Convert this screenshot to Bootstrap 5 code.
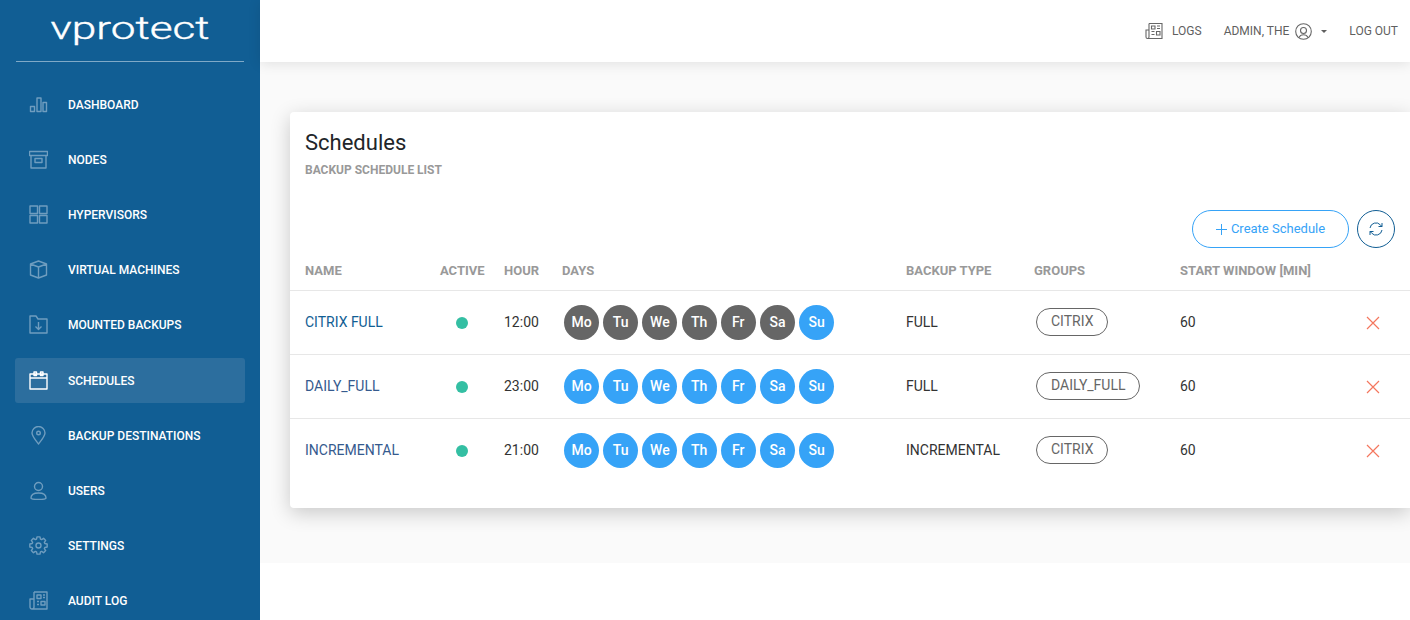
<!DOCTYPE html>
<html lang="en">
<head>
  <meta charset="UTF-8">
  <title>vProtect - Schedules</title>
  <link href="https://cdn.jsdelivr.net/npm/bootstrap@5.3.0/dist/css/bootstrap.min.css" rel="stylesheet">
  <style>
    html, body { height: 620px; overflow: hidden; }
    body { font-family: Roboto, "Liberation Sans", sans-serif; color: #212529; background: #fff; }
    .side-bar { width: 260px; flex: 0 0 260px; height: 620px; background: #115e94; overflow: hidden; }
    .brand-box { height: 62px; margin: 0 16px; border-bottom: 1px solid #7fa9c7; }
    .brand-name { color: #fff; font-size: 32px; line-height: 56px; font-weight: 300; display: block; text-align: center; transform: scaleX(1.38); -webkit-text-stroke: .4px #fff; }
    .side-menu { padding: 20px 15px 0; }
    .side-link { height: 45px; margin-bottom: 10px; padding-left: 14px; color: #fff; font-size: 12px; font-weight: 500; border-radius: 3px; text-decoration: none; }
    .side-link:hover { color: #fff; }
    .side-link.current { background: #2c6e9e; margin-top: 11px; }
    .side-link svg { width: 19px; height: 19px; margin-right: 20px; flex: none; fill: none; stroke: #6f9dbf; stroke-width: 1.4; stroke-linejoin: round; }
    .side-link.current svg { stroke: #fff; }
    .main-col { min-width: 0; }
    .top-bar { height: 62px; background: #fff; box-shadow: 0 2px 12px rgba(0,0,0,.1); position: relative; padding-right: 12px; font-size: 12px; color: #5f5f5f; }
    .top-bar svg { fill: none; stroke: #666; stroke-width: 1.1; }
    .top-link { color: #5f5f5f; text-decoration: none; }
    .top-gap { margin-left: 22px; }
    .logs-glyph { margin-right: 9px; }
    .user-glyph { margin-left: 6px; }
    .top-link.dropdown-toggle::after { margin-left: 9px; }
    .work-area { background: #fafafa; height: 501px; padding: 50px 0 0 30px; }
    .sched-card { background: #fff; height: 396px; border-radius: 4px 0 0 4px; box-shadow: 0 5px 20px rgba(0,0,0,.2); }
    .sched-head { padding: 18px 15px 0; }
    .sched-title { font-size: 22px; font-weight: 400; margin: 0 0 6px; line-height: 26px; }
    .sched-sub { font-size: 12px; font-weight: 700; color: #999; line-height: 16px; }
    .tool-row { padding: 32px 15px 0 0; height: 85px; }
    .create-btn { width: 157px; height: 38px; border: 1px solid #36a3f7; border-radius: 19px; color: #36a3f7; background: #fff; font-size: 13px; }
    .create-btn svg { stroke: #36a3f7; fill: none; }
    .reload-btn { width: 38px; height: 38px; border: 1px solid #115e94; border-radius: 50%; background: #fff; }
    .reload-btn svg { stroke: #115e94; fill: none; }
    .sched-table { table-layout: fixed; width: 1120px; margin: 0; font-size: 14px; }
    .sched-table col:nth-child(1) { width: 150px; }
    .sched-table col:nth-child(2) { width: 64px; }
    .sched-table col:nth-child(3) { width: 58px; }
    .sched-table col:nth-child(4) { width: 344px; }
    .sched-table col:nth-child(5) { width: 128px; }
    .sched-table col:nth-child(6) { width: 146px; }
    .sched-table col:nth-child(7) { width: 180px; }
    .sched-table col:nth-child(8) { width: 50px; }
    .sched-table th { font-size: 13px; font-weight: 700; color: #999; padding: 0 0 11px 0; border-bottom: 1px solid #e7e7e7; line-height: 16px; white-space: nowrap; }
    .sched-table td { height: 64px; padding: 0; vertical-align: middle; border-bottom: 1px solid #e7e7e7; color: #333; }
    .sched-table tr:last-child td { border-bottom: 0; }
    .sched-table .first-col { padding-left: 15px; }
    .sched-table .del-col { padding-left: 6px; }
    .job-link { color: #115e94; text-decoration: none; }
    .job-link.seen { color: #355a8e; }
    .status-dot { width: 12px; height: 12px; border-radius: 50%; background: #34bfa3; display: block; margin: 0 0 0 16px; }
    .day-row { padding-left: 2px; }
    .day-pill { width: 35px; height: 35px; border-radius: 50%; background: #666; color: #fff; font-size: 14px; font-weight: 500; margin-right: 4.2px; }
    .day-pill.on { background: #36a3f7; }
    .group-pill { display: block; width: fit-content; height: 28px; line-height: 25px; padding: 0 13.5px 0 14px; border: 1px solid #666; border-radius: 14px; color: #666; font-size: 14px; margin: 0 0 2px 2px; }
    .del-icon { stroke: #f4775e; fill: none; stroke-width: 1.2; display: block; }
  </style>
</head>
<body>
<div class="d-flex">
  <!-- sidebar -->
  <div class="side-bar">
    <div class="brand-box"><span class="brand-name">vprotect</span></div>
    <nav class="side-menu" id="sideMenu"></nav>
  </div>

  <div class="flex-grow-1 main-col">
    <!-- top bar -->
    <div class="top-bar d-flex align-items-center justify-content-end">
      <svg class="logs-glyph" width="18" height="18" viewBox="0 0 18 18"><path d="M4 1.500h13v15H2.500a1.500 1.500 0 0 1-1.500-1.500V8h3M4 1.500v13.500a1.500 1.500 0 0 1-1.500 1.500M6.500 4h3.500v3H6.500zM12 4h3M12 6.500h3M6.500 9.500h3M6.500 12.500h3M11.500 9.500h3.500v3.500h-3.500z"/></svg>
      <a class="top-link" href="#">LOGS</a>
      <a class="top-link top-gap d-flex align-items-center dropdown-toggle" href="#">ADMIN, THE
        <svg class="user-glyph" width="17" height="17" viewBox="0 0 17 17"><circle cx="8.500" cy="8.500" r="7.800"/><circle cx="8.500" cy="7.500" r="3"/><path d="M4 14.500c.8-1.800 2.300-2.800 4.500-2.800s3.700 1 4.500 2.800"/></svg>
      </a>
      <a class="top-link top-gap" href="#">LOG OUT</a>
    </div>

    <div class="work-area">
      <div class="sched-card">
        <div class="sched-head">
          <h3 class="sched-title">Schedules</h3>
          <div class="sched-sub text-uppercase">Backup schedule list</div>
        </div>
        <div class="tool-row d-flex justify-content-end align-items-start gap-2">
          <button class="create-btn d-flex align-items-center justify-content-center" type="button">
            <svg width="11" height="11" viewBox="0 0 11 11" class="me-1"><path d="M5.500 0v11M0 5.500h11"/></svg>Create Schedule
          </button>
          <button class="reload-btn d-flex align-items-center justify-content-center p-0" type="button">
            <svg width="16" height="16" viewBox="0 0 16 16"><path d="M2 7a6 6 0 0 1 10.500-3L14 5.500M14 2v3.500h-3.500M14 9a6 6 0 0 1-10.500 3L2 10.500M2 14v-3.500h3.500"/></svg>
          </button>
        </div>
        <table class="table sched-table">
          <colgroup><col><col><col><col><col><col><col><col></colgroup>
          <thead>
            <tr><th class="first-col">NAME</th><th>ACTIVE</th><th>HOUR</th><th>DAYS</th><th>BACKUP TYPE</th><th>GROUPS</th><th>START WINDOW [MIN]</th><th></th></tr>
          </thead>
          <tbody id="rows"></tbody>
        </table>
      </div>
    </div>
  </div>
</div>

<script src="https://cdn.jsdelivr.net/npm/bootstrap@5.3.0/dist/js/bootstrap.bundle.min.js"></script>
<script>
  // gear outline, 8 teeth
  function gearPath() {
    let pts = [];
    for (let i = 0; i < 8; i++) {
      const a = i * Math.PI / 4;
      [[-.3, 6.6], [-.17, 8.8], [.17, 8.8], [.3, 6.6]].forEach(p => {
        pts.push((9.5 + p[1] * Math.sin(a + p[0])).toFixed(2) + ' ' + (9.5 - p[1] * Math.cos(a + p[0])).toFixed(2));
      });
    }
    return 'M' + pts.join('L') + 'z';
  }

  const menu = [
    ['Dashboard', '<path d="M1.500 11.500h4v5h-4zM8 3h4v13.500H8zM14 7.500h3.500v9H14z"/>'],
    ['Nodes', '<path d="M.5 1.500h18v4H.5zM2 5.500V18h15V5.500M6 8.500h7v4H6z"/>'],
    ['Hypervisors', '<path d="M1 1h7.500v7.500H1zM10.500 1H18v7.500h-7.500zM1 10.500h7.500V18H1zM10.500 10.500H18V18h-7.500z"/>'],
    ['Virtual Machines', '<path d="M9.500 1L1.500 4v11l8 3 8-3V4zM1.500 4l8 3 8-3M9.500 7v11"/>'],
    ['Mounted Backups', '<path d="M1 1h6l2 3h9v14H1zM9.500 7v7M6.500 11.500l3 3 3-3"/>'],
    ['Schedules', '<path d="M1 3h17v15H1zM1 7h17M5 1h2.500v3.500H5zM11.500 1H14v3.500h-2.500z"/>'],
    ['Backup Destinations', '<path d="M9.500 18c-4-5-6.500-8-6.500-11a6.500 6.500 0 0 1 13 0c0 3-2.500 6-6.500 11z"/><circle cx="9.500" cy="7" r="1.800"/>'],
    ['Users', '<circle cx="9.500" cy="5.500" r="4"/><path d="M2 17c0-3 3-5 7.500-5s7.500 2 7.500 5c0 1-3 1.500-7.500 1.500S2 18 2 17z"/>'],
    ['Settings', `<circle cx="9.500" cy="9.500" r="2.500"/><path d="${gearPath()}"/>`],
    ['Audit Log', '<path d="M5 1h13v17H3a2 2 0 0 1-2-2V8h4M5 1v15a2 2 0 0 1-2 2M8 4h4v3.500H8zM14 4h2M14 6.500h2M8 10.500h2M8 13.500h2M12 10.500h4v3.500h-4z"/>']
  ];
  document.getElementById('sideMenu').innerHTML = menu.map(m =>
    `<a href="#" class="side-link d-flex align-items-center text-uppercase${m[0]==='Schedules'?' current':''}"><svg viewBox="0 0 19 19">${m[1]}</svg>${m[0]}</a>`
  ).join('');

  const days = ['Mo','Tu','We','Th','Fr','Sa','Su'];
  const jobs = [
    { name:'CITRIX FULL', hour:'12:00', on:[6], type:'FULL', group:'CITRIX', seen:false },
    { name:'DAILY_FULL', hour:'23:00', on:[0,1,2,3,4,5,6], type:'FULL', group:'DAILY_FULL', seen:true },
    { name:'INCREMENTAL', hour:'21:00', on:[0,1,2,3,4,5,6], type:'INCREMENTAL', group:'CITRIX', seen:true }
  ];
  document.getElementById('rows').innerHTML = jobs.map(j => `
    <tr>
      <td class="first-col"><a href="#" class="job-link${j.seen?' seen':''}">${j.name}</a></td>
      <td><span class="status-dot"></span></td>
      <td>${j.hour}</td>
      <td><div class="d-flex day-row">${days.map((d,i)=>`<span class="day-pill d-flex align-items-center justify-content-center${j.on.includes(i)?' on':''}">${d}</span>`).join('')}</div></td>
      <td>${j.type}</td>
      <td><span class="group-pill">${j.group}</span></td>
      <td>60</td>
      <td class="del-col"><svg class="del-icon" width="14" height="14" viewBox="0 0 14 14"><path d="M1 1l12 12M13 1L1 13"/></svg></td>
    </tr>`).join('');
</script>
</body>
</html>
